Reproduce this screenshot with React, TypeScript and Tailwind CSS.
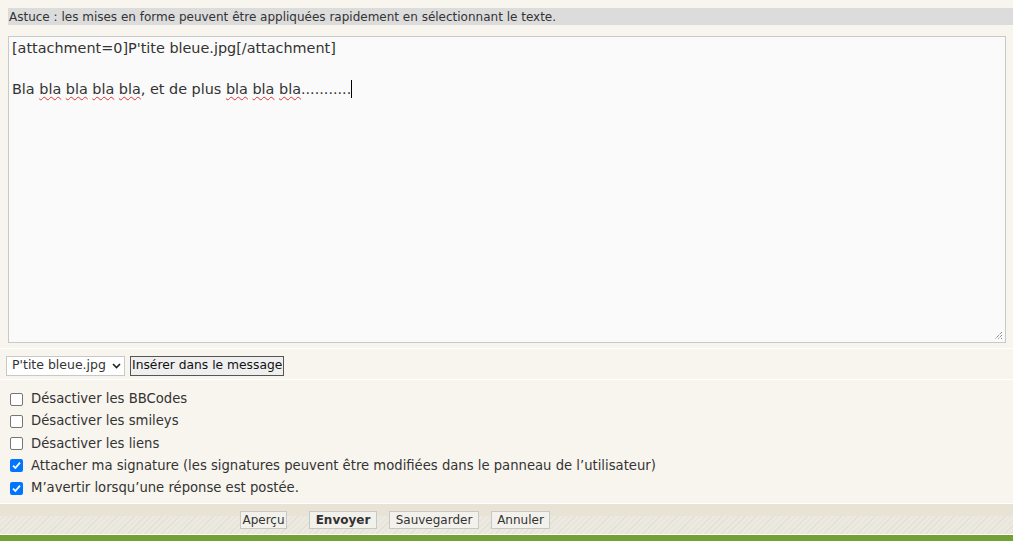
import React from "react";

const font = { fontFamily: '"DejaVu Sans", Verdana, sans-serif' };

function Wavy({ children }: { children: React.ReactNode }) {
  return (
    <span className="underline decoration-wavy decoration-[#e03030] decoration-1 underline-offset-[2px]">
      {children}
    </span>
  );
}

function Check({ checked, label }: { checked?: boolean; label: string }) {
  return (
    <label className="flex items-center h-[22.25px] text-[13.2px] text-[#333]">
      {checked ? (
        <span className="ml-[10px] mr-[8px] w-[13px] h-[13px] rounded-[2px] bg-[#0075ff] flex items-center justify-center">
          <svg width="11" height="11" viewBox="0 0 11 11">
            <path d="M2 5.6 L4.4 8 L9 2.6" stroke="white" strokeWidth="1.8" fill="none" />
          </svg>
        </span>
      ) : (
        <span className="ml-[10px] mr-[8px] w-[13px] h-[13px] rounded-[2px] border border-[#767676] bg-white" />
      )}
      <span>{label}</span>
    </label>
  );
}

function Btn({ children, bold, w }: { children: React.ReactNode; bold?: boolean; w: string }) {
  return (
    <span
      className={`h-[18px] shrink-0 flex items-center justify-center border border-[#c8c8c8] bg-[#f3f1ec] text-[12px] text-[#333] whitespace-nowrap ${w} ${bold ? "font-bold" : ""}`}
    >
      {children}
    </span>
  );
}

export default function App() {
  return (
    <div className="w-[1013px] h-[541px] bg-[#f8f5ee] flex flex-col overflow-hidden" style={font}>
      <div className="pt-[8px] pl-[8px]">
        <div className="h-[17px] bg-[#dcdcdc] text-[12px] text-[#333] pl-[1px] flex items-center">
          Astuce : les mises en forme peuvent être appliquées rapidement en sélectionnant le texte.
        </div>
      </div>
      <div className="pt-[11px] pl-[8px] pb-[5px] border-b border-white">
        <div className="relative w-[998px] h-[307px] border border-[#c9c9c9] bg-[#fafafa] text-[14.4px] text-[#333] leading-[20.5px] pl-[3px] pt-[1px]">
          <div>[attachment=0]P'tite bleue.jpg[/attachment]</div>
          <div className="h-[20.5px]" />
          <div>
            Bla <Wavy>bla</Wavy> <Wavy>bla</Wavy> <Wavy>bla</Wavy> <Wavy>bla</Wavy>, et de plus{" "}
            <Wavy>bla</Wavy> <Wavy>bla</Wavy> <Wavy>bla</Wavy>...........
            <span className="inline-block w-[1px] h-[18px] bg-black align-middle -mt-[2px]" />
          </div>
          <svg className="absolute right-[2px] bottom-[2px]" width="9" height="9" viewBox="0 0 9 9">
            <path d="M8 1 L1 8 M8 4 L4 8 M8 7 L7 8" stroke="#555" strokeWidth="1" strokeDasharray="1 1" />
          </svg>
        </div>
      </div>
      <div className="h-[31px] flex items-center pl-[6px] pt-[3px] gap-[5px] border-b border-white">
        <span className="h-[20px] w-[119px] border border-[#c8c8c8] bg-white flex items-center pl-[5px] text-[12.5px] text-[#333]">
          P'tite bleue.jpg
          <svg className="ml-[6px]" width="9" height="6" viewBox="0 0 9 6">
            <path d="M1 1 L4.5 4.5 L8 1" stroke="#222" strokeWidth="1.6" fill="none" />
          </svg>
        </span>
        <span className="h-[20px] border border-[#555] bg-[#efefef] flex items-center px-[1px] text-[12.3px] text-[#111]">
          Insérer dans le message
        </span>
      </div>
      <div className="h-[124px] pt-[8px] border-b border-white">
        <Check label="Désactiver les BBCodes" />
        <Check label="Désactiver les smileys" />
        <Check label="Désactiver les liens" />
        <Check checked label="Attacher ma signature (les signatures peuvent être modifiées dans le panneau de l’utilisateur)" />
        <Check checked label="M’avertir lorsqu’une réponse est postée." />
      </div>
      <div
        className="h-[31px] flex items-center pl-[240px] pt-[2px] border-b border-white"
        style={{
          background:
            "linear-gradient(#e9e3d5 0, #e9e3d5 12px, transparent 12px), repeating-linear-gradient(135deg, #ece9e1 0 3px, #e4e0d6 3px 4px)",
        }}
      >
        <Btn w="w-[47px]">Aperçu</Btn>
        <span className="w-[22px] shrink-0" />
        <Btn bold w="w-[68px]">Envoyer</Btn>
        <span className="w-[12px] shrink-0" />
        <Btn w="w-[90px]">Sauvegarder</Btn>
        <span className="w-[12px] shrink-0" />
        <Btn w="w-[59px]">Annuler</Btn>
      </div>
      <div className="flex-1 bg-[#74a135]" />
    </div>
  );
}
